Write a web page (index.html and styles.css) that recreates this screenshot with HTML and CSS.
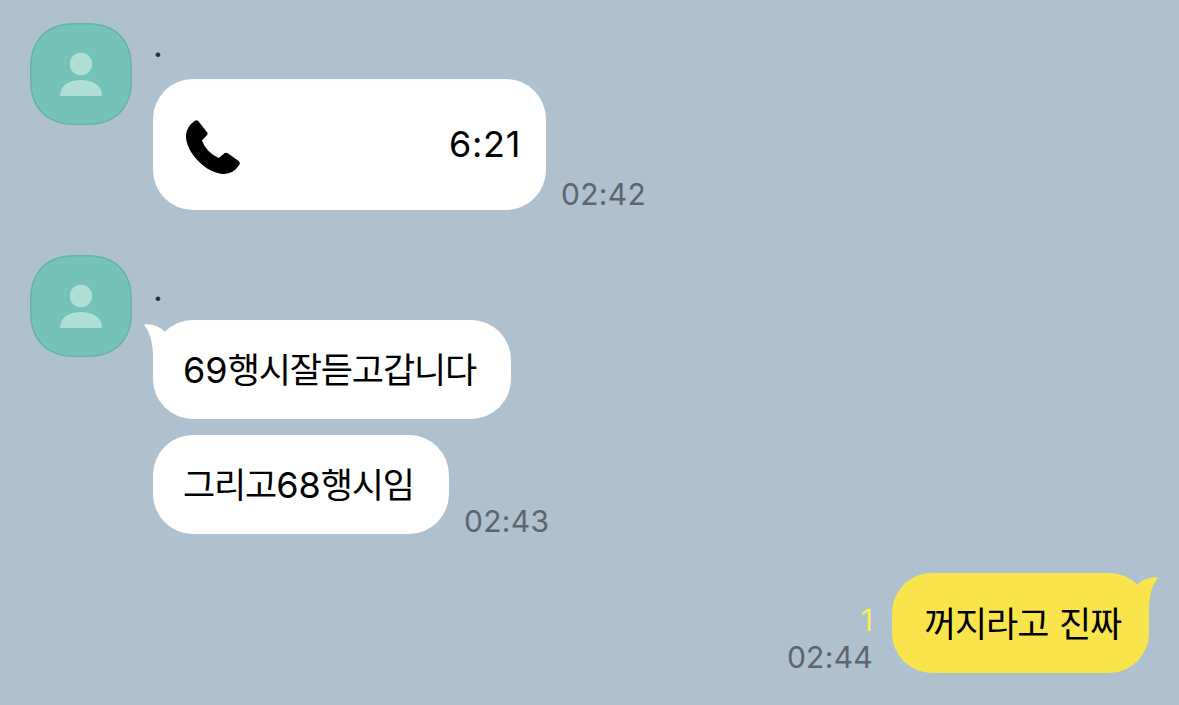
FILE: index.html
```html
<!DOCTYPE html>
<html lang="ko">
<head>
<meta charset="utf-8">
<title>Chat</title>
<link rel="stylesheet" href="styles.css">
</head>
<body>
<svg class="defs" width="0" height="0">
  <symbol id="person" viewBox="0 0 102 102">
    <path class="avatar-bg" d="M.8 51V44C.8 17 17 .8 44 .8h14C85 .8 101.200 17 101.200 44v14c0 27-16.200 43.200-43.200 43.200H44C17 101.200.8 85 .8 58z"/>
    <circle class="avatar-fg" cx="51" cy="41" r="11.200"/>
    <path class="avatar-fg" d="M30 73c0-10.500 9-16 21-16s21 5.500 21 16z"/>
  </symbol>
</svg>
<main class="chat">
  <section class="row row-call">
    <svg class="avatar"><use href="#person"/></svg>
    <div class="column">
      <div class="name">.</div>
      <div class="line">
        <div class="bubble call">
          <svg class="phone" viewBox="123 149 163 163"><path d="M149 152Q155 147 160 152L187 187Q190 191 186 195L171 211Q184 246 222 264L239 249Q244 246 249 249L281 272Q288 278 284 284Q264 316 228 311C178 303 128 249 123 203Q121 171 149 152Z"/></svg>
          <span>6:21</span>
        </div>
        <time>02:42</time>
      </div>
    </div>
  </section>
  <section class="row row-text">
    <svg class="avatar"><use href="#person"/></svg>
    <div class="column">
      <div class="name">.</div>
      <div class="line">
        <div class="bubble first"><svg class="tail" viewBox="0 0 24 40"><path d="M0 .5Q12-1 21 8L24 40H9V32Q9 12 0 .5Z"/></svg><span class="num">69</span>행시잘듣고갑니다</div>
      </div>
      <div class="line">
        <div class="bubble second">그리고<span class="num">68</span>행시임</div>
        <time class="low">02:43</time>
      </div>
    </div>
  </section>
  <section class="mine">
    <div class="meta"><span class="unread">1</span><time>02:44</time></div>
    <div class="bubble own"><svg class="tail" viewBox="0 0 24 40"><path d="M0 .5Q12-1 21 8L24 40H9V32Q9 12 0 .5Z"/></svg>꺼지라고 진짜</div>
  </section>
</main>
</body>
</html>
```
FILE: styles.css
```css
* { box-sizing: border-box; }
body {
  margin: 0;
  background: #afc0cf;
  color: #000;
  font-family: Inter, "Noto Sans CJK KR", sans-serif;
}
.defs { position: absolute; }
.chat {
  width: 1179px;
  height: 705px;
  padding: 23px 30px 0;
  overflow: hidden;
}
.row { display: flex; gap: 21px; }
.row-call { height: 232px; }
.row-text { height: 318px; }
.avatar { width: 102px; height: 102px; flex: none; }
.avatar-bg { fill: #74c2b8; stroke: #68b2aa; stroke-width: 1.500px; }
.avatar-fg { fill: #afded5; }
.name {
  height: 56px;
  padding: 4px 0 0 0;
  font-size: 34px;
  line-height: 36px;
  color: #26313a;
}
.row-text .name { height: 65px; padding-top: 16px; }
.line { display: flex; align-items: flex-end; gap: 15px; }
.line + .line { margin-top: 16px; }
.bubble {
  position: relative;
  height: 99px;
  padding: 1px 0 0 30px;
  border-radius: 40px;
  background: #fff;
  font-size: 35px;
  line-height: 99px;
  letter-spacing: -1.150px;
  white-space: nowrap;
}
.num { font-size: 36px; letter-spacing: 0; }
.call {
  display: flex;
  align-items: center;
  justify-content: space-between;
  width: 393px;
  height: 131px;
  padding: 0 25px 0 33px;
  font-size: 36px;
  letter-spacing: 0.700px;
}
.phone { width: 54px; height: 54px; margin-top: 5px; }
.first { width: 358px; }
.second { width: 296px; }
time {
  position: relative;
  top: -1px;
  font-size: 30px;
  line-height: 30px;
  letter-spacing: 0.300px;
  color: #5c6670;
}
.low { margin-bottom: -3px; }
.tail {
  position: absolute;
  top: 4px;
  left: -9px;
  width: 24px;
  height: 40px;
  fill: #fff;
}
.mine { display: flex; justify-content: flex-end; align-items: flex-end; gap: 19px; }
.meta { display: flex; flex-direction: column; align-items: flex-end; }
.unread { margin-bottom: 4px; font-size: 30px; line-height: 38px; color: #faed50; }
.own {
  width: 257px;
  height: 100px;
  padding-left: 32px;
  padding-top: 2px;
  background: #f9e54b;
  word-spacing: 2px;
}
.own .tail { left: auto; right: -9px; transform: scaleX(-1); fill: #f9e54b; }
```
